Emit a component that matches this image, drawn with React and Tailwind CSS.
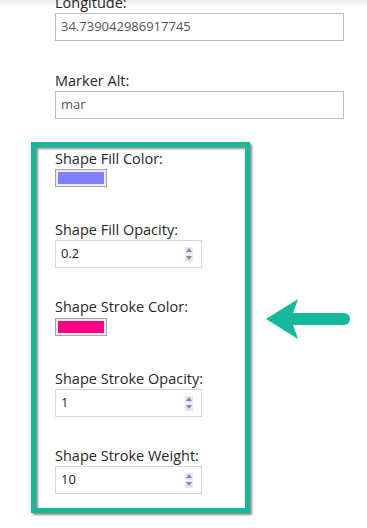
import React from "react";

const font = { fontFamily: '"Open Sans", "Liberation Sans", sans-serif' };

function Label({ children, className = "" }) {
  return (
    <div className={"h-[20px] text-[14.5px] leading-[20px] text-[#262626] " + className}>
      {children}
    </div>
  );
}

function TextInput({ value }) {
  return (
    <div className="flex h-[28px] w-[289px] items-center border border-[#bdbdbd] bg-white px-[5px] text-[13px] text-[#555555]">
      {value}
    </div>
  );
}

function Spinner() {
  return (
    <div className="flex flex-col gap-[1px]">
      <div className="flex h-[7px] w-[8px] items-center justify-center bg-[#e3e8f0]">
        <svg width="6" height="4" viewBox="0 0 6 4">
          <polygon points="3,0 6,4 0,4" fill="#7a8ea8" />
        </svg>
      </div>
      <div className="flex h-[7px] w-[8px] items-center justify-center bg-[#e3e8f0]">
        <svg width="6" height="4" viewBox="0 0 6 4">
          <polygon points="0,0 6,0 3,4" fill="#7a8ea8" />
        </svg>
      </div>
    </div>
  );
}

function NumberInput({ value }) {
  return (
    <div className="flex h-[28px] w-[147px] items-center justify-between border border-[#d6d6d6] bg-white pl-[5px] pr-[8px] text-[13px] text-[#222222]">
      <span>{value}</span>
      <Spinner />
    </div>
  );
}

function Swatch({ color }) {
  return (
    <div className="h-[18px] w-[52px] border border-[#a3a3a3] bg-[#ececec] p-[2px]">
      <div className={"h-full w-full " + color} />
    </div>
  );
}

export default function App() {
  return (
    <div className="relative h-[528px] w-[367px] overflow-hidden bg-white" style={font}>
      <div className="flex flex-col pl-[55px]">
        <Label className="mt-[-7px]">Longitude:</Label>
        <TextInput value="34.739042986917745" />
        <Label className="mt-[30px]">Marker Alt:</Label>
        <TextInput value="mar" />
      </div>

      <div className="ml-[31px] mt-[23px] flex w-[219px] flex-col border-[5px] border-[#14b89c] pb-[14px] pl-[19px] pt-[2px] shadow-[2px_2px_2px_rgba(0,0,0,0.45),inset_2px_2px_2px_rgba(0,0,0,0.45)]">
        <Label>Shape Fill Color:</Label>
        <Swatch color="bg-[#8080ff]" />
        <Label className="mt-[33px]">Shape Fill Opacity:</Label>
        <NumberInput value="0.2" />
        <Label className="mt-[29px]">Shape Stroke Color:</Label>
        <div className="mt-[1px]">
          <Swatch color="bg-[#ff0080]" />
        </div>
        <Label className="mt-[33px]">Shape Stroke Opacity:</Label>
        <NumberInput value="1" />
        <Label className="mt-[29px]">Shape Stroke Weight:</Label>
        <NumberInput value="10" />
      </div>

      <svg
        className="absolute left-[264px] top-[298px]"
        width="90"
        height="42"
        viewBox="0 0 90 42"
      >
        <line x1="28" y1="21" x2="80" y2="21" stroke="#14b89c" strokeWidth="12" strokeLinecap="round" />
        <polygon points="2,21 34,1 27,21 34,41" fill="#14b89c" />
      </svg>

      <div className="pointer-events-none absolute left-0 top-0 h-[7px] w-full bg-gradient-to-b from-[rgba(0,0,0,0.07)] to-transparent" />
    </div>
  );
}
